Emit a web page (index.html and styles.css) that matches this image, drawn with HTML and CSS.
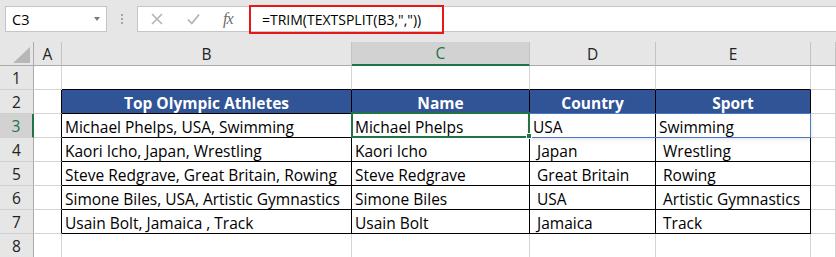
FILE: index.html
```html
<!DOCTYPE html>
<html lang="en">
<head>
  <meta charset="UTF-8" />
  <title>TEXTSPLIT with TRIM</title>
  <link rel="stylesheet" href="styles.css">
</head>
<body>

  <!-- Name box + formula bar -->
  <div class="toolbar">
    <div class="namebox">
      <span>C3</span>
      <span class="drop"></span>
    </div>
    <div class="grip"><i></i><i></i><i></i></div>
    <div class="formula-bar">
      <div class="fb-buttons">
        <svg class="fb-icon" width="12" height="12" viewBox="0 0 12 12">
          <path d="M1 1 L11 11 M11 1 L1 11" stroke="#b3b3b3" stroke-width="1.6" fill="none" />
        </svg>
        <svg class="fb-icon" width="13" height="12" viewBox="0 0 13 12">
          <path d="M1 6.5 L4.8 10.5 L12 1.5" stroke="#b3b3b3" stroke-width="1.8" fill="none" />
        </svg>
        <span class="fx">fx</span>
      </div>
      <div class="formula">=TRIM(TEXTSPLIT(B3,","))</div>
    </div>
  </div>

  <!-- Worksheet -->
  <div class="sheet">
    <div class="corner">
      <svg width="17" height="16" viewBox="0 0 17 16"><polygon points="0,16 17,16 17,0" fill="#b7b7b7" /></svg>
    </div>
    <div class="col-head">A</div>
    <div class="col-head">B</div>
    <div class="col-head selected">C</div>
    <div class="col-head">D</div>
    <div class="col-head">E</div>
    <div class="col-head"></div>

    <div class="row-head">1</div>
    <div class="cell"></div>
    <div class="cell above"></div>
    <div class="cell above"></div>
    <div class="cell above"></div>
    <div class="cell above"></div>
    <div class="cell"></div>

    <div class="row-head">2</div>
    <div class="cell before"></div>
    <div class="cell th">Top Olympic Athletes</div>
    <div class="cell th">Name</div>
    <div class="cell th">Country</div>
    <div class="cell th">Sport</div>
    <div class="cell"></div>

    <div class="row-head selected">3</div>
    <div class="cell before"></div>
    <div class="cell td">Michael Phelps, USA, Swimming</div>
    <div class="cell td">Michael Phelps<span class="active"><span class="handle"></span></span></div>
    <div class="cell td">USA<span class="spill"></span></div>
    <div class="cell td">Swimming</div>
    <div class="cell"></div>

    <div class="row-head">4</div>
    <div class="cell before"></div>
    <div class="cell td">Kaori Icho, Japan, Wrestling</div>
    <div class="cell td">Kaori Icho</div>
    <div class="cell td"> Japan</div>
    <div class="cell td"> Wrestling</div>
    <div class="cell"></div>

    <div class="row-head">5</div>
    <div class="cell before"></div>
    <div class="cell td">Steve Redgrave, Great Britain, Rowing</div>
    <div class="cell td">Steve Redgrave</div>
    <div class="cell td"> Great Britain</div>
    <div class="cell td"> Rowing</div>
    <div class="cell"></div>

    <div class="row-head">6</div>
    <div class="cell before"></div>
    <div class="cell td">Simone Biles, USA, Artistic Gymnastics</div>
    <div class="cell td">Simone Biles</div>
    <div class="cell td"> USA</div>
    <div class="cell td"> Artistic Gymnastics</div>
    <div class="cell"></div>

    <div class="row-head">7</div>
    <div class="cell before"></div>
    <div class="cell td">Usain Bolt, Jamaica , Track</div>
    <div class="cell td">Usain Bolt</div>
    <div class="cell td"> Jamaica</div>
    <div class="cell td"> Track</div>
    <div class="cell"></div>

    <div class="row-head">8</div>
    <div class="cell"></div>
    <div class="cell"></div>
    <div class="cell"></div>
    <div class="cell"></div>
    <div class="cell"></div>
    <div class="cell"></div>
  </div>

</body>
</html>
```

FILE: styles.css
```css
* {
  box-sizing: border-box;
}
body {
  margin: 0;
  overflow: hidden;
  background: #fff;
  font-family: "Open Sans", "Liberation Sans", sans-serif;
  font-size: 15.5px;
  color: #000;
}

/* toolbar */
.toolbar {
  height: 42px;
  background: #e6e6e6;
  display: flex;
  align-items: flex-start;
  padding: 6px 0 0 5px;
}
.namebox {
  width: 102px;
  height: 26px;
  background: #fff;
  border: 1px solid #c6c6c6;
  display: flex;
  align-items: center;
  justify-content: space-between;
  padding: 1px 6px 0 6px;
  font-size: 14.5px;
}
.drop {
  width: 0;
  height: 0;
  border-left: 3.5px solid transparent;
  border-right: 3.5px solid transparent;
  border-top: 4px solid #7a7a7a;
  margin-top: -2px;
}
.grip {
  width: 30px;
  height: 26px;
  display: flex;
  flex-direction: column;
  align-items: center;
  justify-content: center;
  gap: 2px;
}
.grip i {
  display: block;
  width: 2px;
  height: 2px;
  background: #a6a6a6;
}
.formula-bar {
  flex: 1;
  height: 26px;
  background: #fff;
  border: 1px solid #c6c6c6;
  border-right: none;
  display: flex;
  align-items: center;
}
.fb-buttons {
  display: flex;
  align-items: center;
  height: 100%;
  padding-left: 13px;
  width: 111px;
}
.fb-icon {
  margin-right: 24px;
}
.fb-icon + .fb-icon {
  margin-right: 23px;
}
.fx {
  font-family: "Liberation Serif", serif;
  font-style: italic;
  font-size: 16px;
  color: #6d6d6d;
  letter-spacing: -1px;
}
.formula {
  width: 195px;
  height: 29px;
  border: 2px solid #e81717;
  display: flex;
  align-items: center;
  padding-left: 11px;
  font-size: 14px;
  white-space: pre;
}

/* sheet grid */
.sheet {
  display: grid;
  grid-template-columns: 34px 28px 290px 178px 126px 155px 1fr;
  grid-template-rows: repeat(9, 24px);
}
.corner {
  background: #e6e6e6;
  border-right: 1px solid #ababab;
  border-bottom: 1px solid #ababab;
  display: flex;
  align-items: flex-end;
  justify-content: flex-end;
  padding: 0 3px 2px 0;
}
.col-head {
  background: #e6e6e6;
  border-right: 1px solid #c3c3c3;
  border-bottom: 1px solid #ababab;
  display: flex;
  align-items: center;
  justify-content: center;
  color: #222;
}
.col-head.selected {
  background: #d2d2d2;
  color: #217346;
  border-bottom: 2px solid #217346;
}
.row-head {
  background: #e6e6e6;
  border-right: 1px solid #ababab;
  border-bottom: 1px solid #d0d0d0;
  display: flex;
  align-items: center;
  justify-content: center;
  color: #222;
}
.row-head.selected {
  background: #d2d2d2;
  color: #217346;
  border-right: 2px solid #217346;
}
.cell {
  position: relative;
  border-right: 1px solid #d4d4d4;
  border-bottom: 1px solid #d4d4d4;
  display: flex;
  align-items: center;
  padding: 2px 3px 0;
  white-space: pre;
}
.cell.above {
  border-bottom-color: #000;
}
.cell.before {
  border-right-color: #000;
}
.td {
  border-color: #000;
}
.th {
  border-color: #000;
  background: #305496;
  color: #fff;
  font-weight: bold;
  justify-content: center;
}

/* selection overlays */
.active {
  position: absolute;
  left: -1px;
  right: -1px;
  top: -2px;
  bottom: -1px;
  border: 2px solid #217346;
  z-index: 2;
}
.handle {
  position: absolute;
  right: -4px;
  bottom: -3px;
  width: 6px;
  height: 6px;
  background: #217346;
  border: 1px solid #fff;
}
.spill {
  position: absolute;
  left: -1px;
  top: -1px;
  width: 282px;
  height: 25px;
  border: 1px solid #4a78c8;
  box-shadow: 0 1px 4px rgba(0, 0, 0, 0.12);
  z-index: 1;
}
```
